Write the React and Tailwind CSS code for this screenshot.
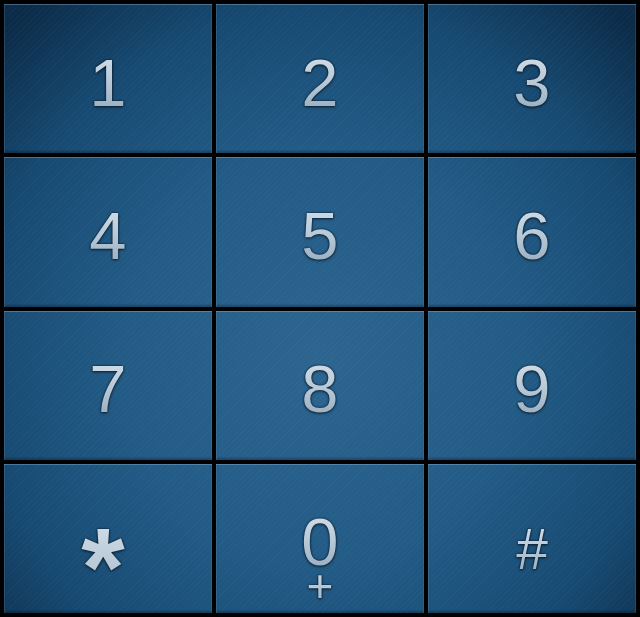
const keys = [
  { label: "1" },
  { label: "2" },
  { label: "3" },
  { label: "4" },
  { label: "5" },
  { label: "6" },
  { label: "7" },
  { label: "8" },
  { label: "9" },
  { label: "*", kind: "star" },
  { label: "0", sub: "+" },
  { label: "#", kind: "hash" },
];

const glyph =
  "leading-none text-transparent bg-clip-text bg-[linear-gradient(180deg,#d6e1ea_0%,#b4c6d5_55%,#93a9bc_100%)] [filter:drop-shadow(0_0_1px_rgba(4,18,32,0.9))_drop-shadow(0_1px_1px_rgba(0,0,0,0.45))]";

function Key({ k }) {
  return (
    <button
      className="flex flex-col items-center justify-center pt-[7px] bg-fixed bg-[repeating-linear-gradient(135deg,rgba(255,255,255,0.025)_0px,rgba(255,255,255,0.025)_1px,transparent_1px,transparent_4px),radial-gradient(ellipse_70%_75%_at_50%_58%,#2b6590_0%,#225b86_45%,#174a72_75%,#0b2b48_100%)] shadow-[inset_0_1px_0_rgba(160,200,230,0.35),inset_1px_0_0_rgba(160,200,230,0.18),inset_-1px_0_0_rgba(160,200,230,0.14),inset_0_-2px_2px_rgba(0,0,0,0.25)]"
      style={{ fontFamily: '"Liberation Sans", Arial, sans-serif' }}
    >
      {k.kind === "star" ? (
        <span className={`${glyph} text-[112px] font-bold translate-y-[26px] -translate-x-[5px]`}>*</span>
      ) : k.kind === "hash" ? (
        <span className={`${glyph} text-[57px] translate-y-[8px]`}>#</span>
      ) : (
        <span className={`${glyph} text-[67px]`}>{k.label}</span>
      )}
      {k.sub && (
        <span className={`${glyph} text-[46px] -mt-[12px] -mb-[34px]`}>{k.sub}</span>
      )}
    </button>
  );
}

export default function App() {
  return (
    <div className="w-[640px] h-[617px] bg-black p-1 grid grid-cols-3 grid-rows-4 gap-1 overflow-hidden">
      {keys.map((k) => (
        <Key key={k.label} k={k} />
      ))}
    </div>
  );
}
